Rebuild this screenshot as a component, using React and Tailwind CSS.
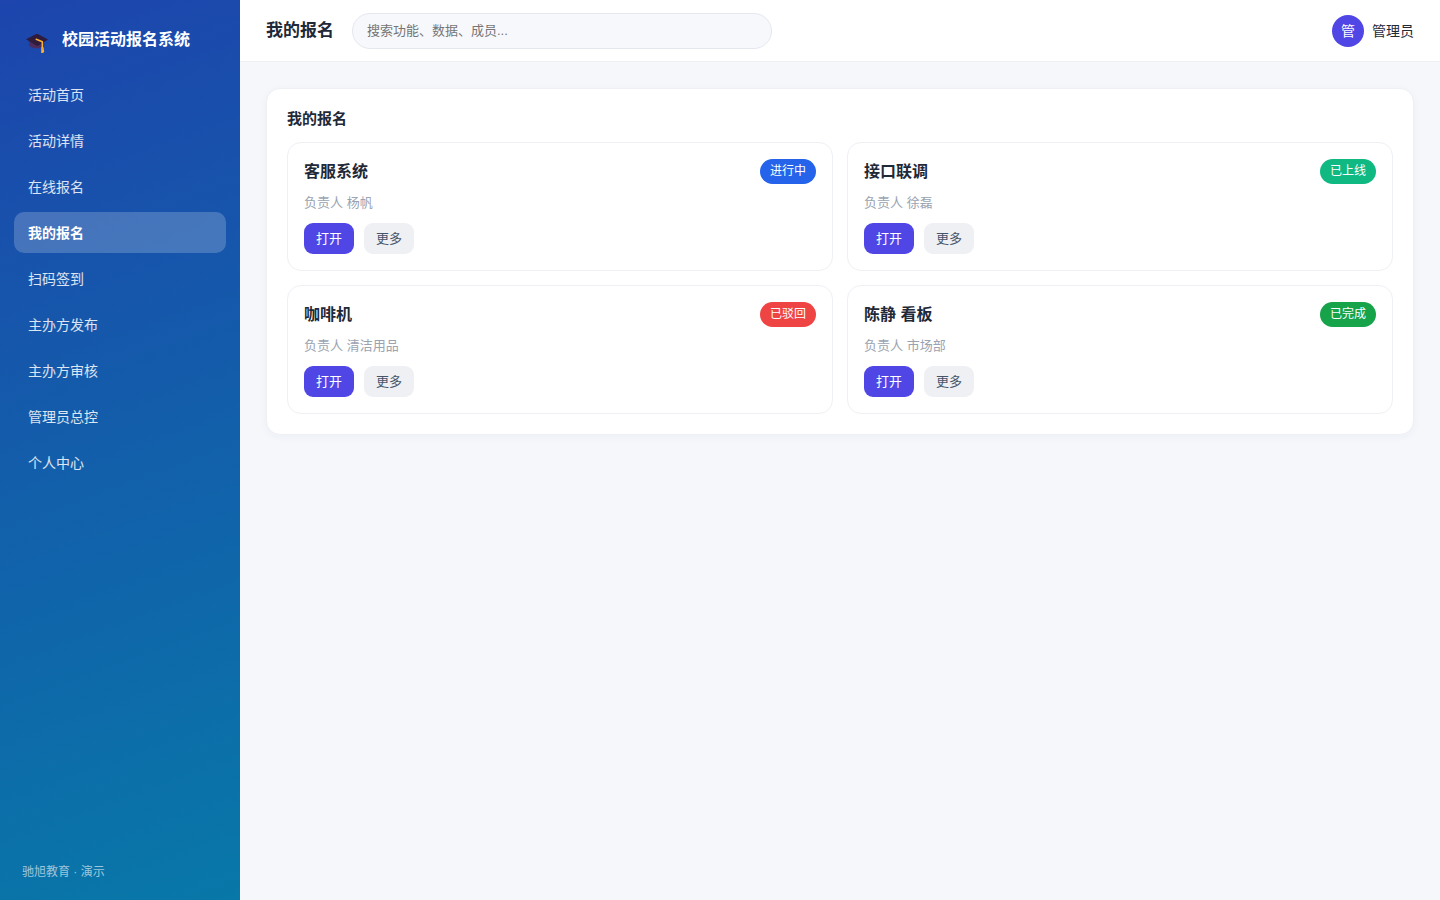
import React, { useState } from 'react';
import clsx from 'clsx';

const navItems = [
    '活动首页',
    '活动详情',
    '在线报名',
    '我的报名',
    '扫码签到',
    '主办方发布',
    '主办方审核',
    '管理员总控',
    '个人中心',
];

const signups = [
    { title: '客服系统', owner: '杨帆', status: '进行中', color: 'bg-[#2563eb]' },
    { title: '接口联调', owner: '徐磊', status: '已上线', color: 'bg-[#10b981]' },
    { title: '咖啡机', owner: '清洁用品', status: '已驳回', color: 'bg-[#ef4444]' },
    { title: '陈静 看板', owner: '市场部', status: '已完成', color: 'bg-[#16a34a]' },
];

function CapIcon() {
    return (
        <svg viewBox="0 0 30 26" className="w-[30px] h-[26px] shrink-0" aria-hidden="true">
            <path d="M7 12.5v5.2c0 2 3.6 3.6 7.6 3.6 3.4 0 6.2-1.2 6.9-2.6v-6.2z" fill="#4c2c5c" />
            <path d="M4 12.3 14.2 7.1c.6-.3 1-.3 1.6 0L26 12.4 16.4 18.6c-.8.5-1.4.5-2.2 0z" fill="#2f1b3d" />
            <path d="M14.2 12.2 20.3 14.8v6" fill="none" stroke="#fbb232" strokeWidth="1.5" strokeLinecap="round" strokeLinejoin="round" />
            <path d="M19.2 20.3h2.3l.7 4.4-1.2 1.3h-1.8z" fill="#fbb232" />
            <path d="M19.1 21.9h2.8" stroke="#e08a1e" strokeWidth=".7" />
        </svg>
    );
}

function Sidebar({ current, onSelect }) {
    return (
        <aside className="flex flex-col w-60 shrink-0 px-[14px] pt-6 pb-[18px] text-white bg-[linear-gradient(160deg,#1d45ad,#0878a8)]">
            <div className="flex items-center gap-[10px] h-8 px-2 mb-[18px]">
                <CapIcon />
                <span className="text-base font-bold">校园活动报名系统</span>
            </div>
            <nav className="flex flex-col gap-[5px]">
                {navItems.map((item) => (
                    <a
                        key={item}
                        href="#"
                        onClick={(e) => {
                            e.preventDefault();
                            onSelect(item);
                        }}
                        className={clsx(
                            'flex items-center h-[41px] px-[14px] rounded-[10px] text-sm',
                            item === current ? 'bg-white/20 font-bold' : 'text-white/85'
                        )}
                    >
                        {item}
                    </a>
                ))}
            </nav>
            <div className="mt-auto px-2 text-xs leading-5 text-white/60">驰旭教育 · 演示</div>
        </aside>
    );
}

function Topbar({ title }) {
    return (
        <header className="flex items-center gap-[18px] h-[62px] px-[26px] bg-white border-b border-[#eef0f4]">
            <h1 className="text-[17px] font-bold whitespace-nowrap">{title}</h1>
            <input
                type="search"
                aria-label="搜索"
                placeholder="搜索功能、数据、成员..."
                className="w-full max-w-[420px] h-9 px-[14px] rounded-full border border-[#e5e7ef] bg-[#f7f8fc] text-[13px] placeholder:text-[#757575] outline-none"
            />
            <div className="flex items-center gap-2 ml-auto text-sm whitespace-nowrap">
                <span className="flex items-center justify-center w-8 h-8 rounded-full bg-[#4f46e5] text-white">管</span>
                <span>管理员</span>
            </div>
        </header>
    );
}

function SignupCard({ signup }) {
    return (
        <article className="p-4 border border-[#eef0f4] rounded-[14px]">
            <div className="flex items-center justify-between">
                <h3 className="text-base leading-6 font-bold">{signup.title}</h3>
                <span className={clsx('px-[10px] rounded-full text-xs leading-[25px] text-white', signup.color)}>
                    {signup.status}
                </span>
            </div>
            <p className="mt-2 text-[13px] leading-[21px] text-[#9aa3b2]">负责人 {signup.owner}</p>
            <div className="flex gap-[10px] mt-[10px]">
                <button className="px-3 rounded-[9px] text-[13px] leading-[31px] text-white bg-[#4f46e5]">打开</button>
                <button className="px-3 rounded-[9px] text-[13px] leading-[31px] text-[#475569] bg-[#eef0f4]">更多</button>
            </div>
        </article>
    );
}

export default function App() {
    const [current, setCurrent] = useState('我的报名');

    return (
        <div className="flex min-h-screen bg-[#f5f7fb] text-[#1f2937] font-['Liberation_Sans','Noto_Sans_CJK_SC',sans-serif]">
            <Sidebar current={current} onSelect={setCurrent} />
            <div className="flex-1 min-w-0">
                <Topbar title={current} />
                <main className="p-[26px]">
                    <section className="p-5 bg-white border border-[#eef0f4] rounded-[14px] shadow-[0_2px_8px_rgba(30,41,90,0.04)]">
                        <h2 className="mb-[13px] text-[15px] leading-5 font-bold">我的报名</h2>
                        <div className="grid grid-cols-2 gap-[14px]">
                            {signups.map((signup) => (
                                <SignupCard key={signup.title} signup={signup} />
                            ))}
                        </div>
                    </section>
                </main>
            </div>
        </div>
    );
}
